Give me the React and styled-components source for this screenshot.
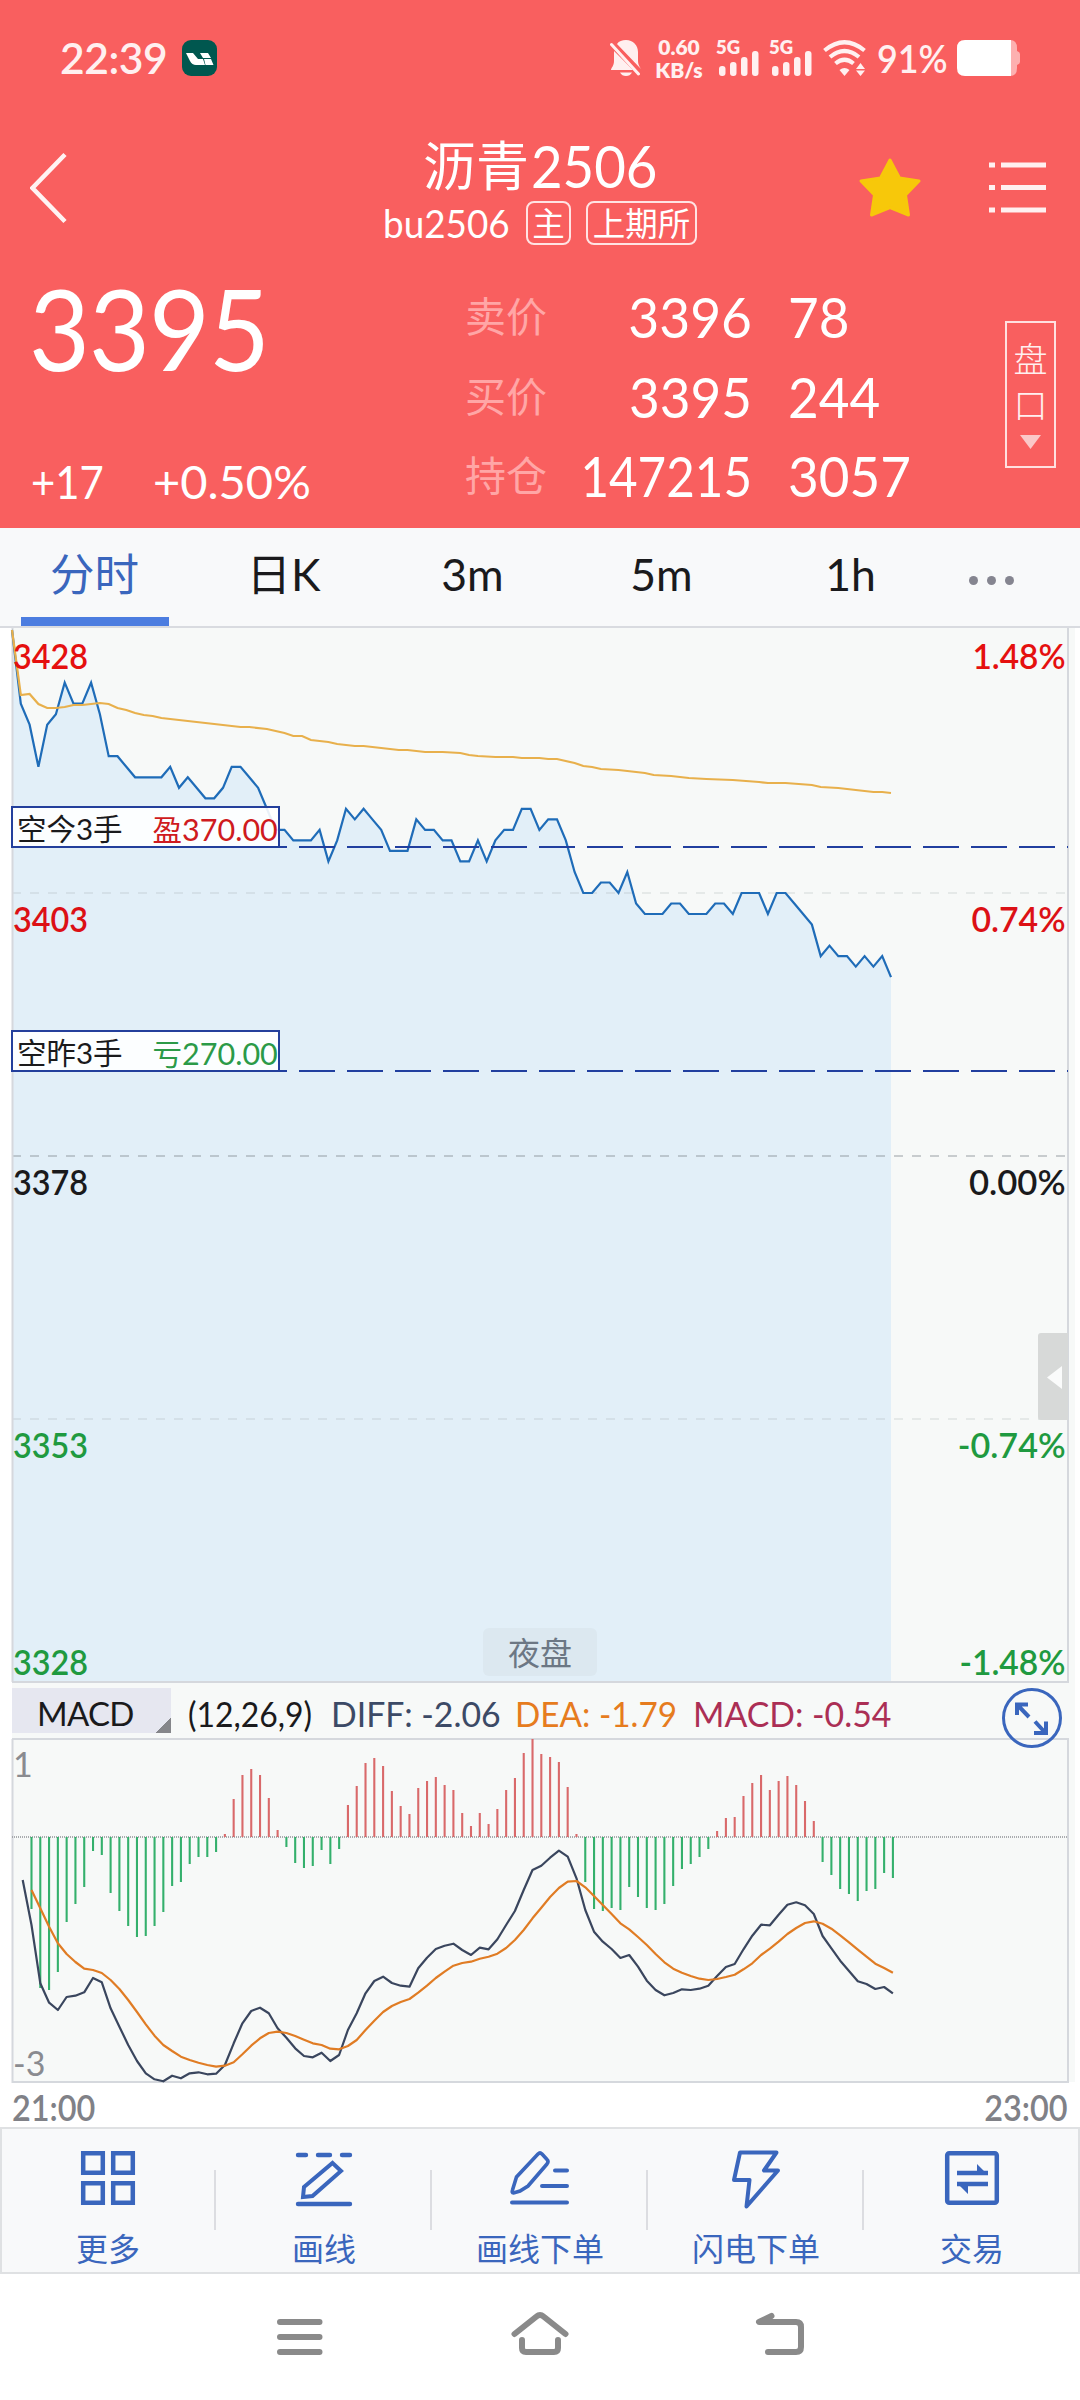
import styled, { createGlobalStyle } from "styled-components";

const GlobalStyle = createGlobalStyle`
  * {
    box-sizing: border-box;
  }
  body {
    margin: 0;
    background-color: #fff;
    font-family: Lato, "Noto Sans CJK SC", sans-serif;
  }
  svg {
    display: block;
    flex: none;
  }
`;

const BLUE = "#3a66bd";

/* price of every minute since 21:00 */
const PRICES = [
  3428, 3421, 3419, 3415, 3419, 3420, 3423, 3421, 3421, 3423, 3420, 3416, 3416,
  3415, 3414, 3414, 3414, 3414, 3415, 3413, 3414, 3413, 3412, 3412, 3413, 3415,
  3415, 3414, 3413, 3411, 3409, 3409, 3408, 3408, 3408, 3409, 3406, 3408, 3411,
  3410, 3411, 3410, 3409, 3407, 3407, 3407, 3410, 3409, 3409, 3408, 3408, 3406,
  3406, 3408, 3406, 3408, 3409, 3409, 3411, 3411, 3409, 3410, 3410, 3408, 3405,
  3403, 3403, 3404, 3404, 3403, 3405, 3402, 3401, 3401, 3401, 3402, 3402, 3401,
  3401, 3401, 3402, 3402, 3401, 3403, 3403, 3403, 3401, 3403, 3403, 3402, 3401,
  3400, 3397, 3398, 3397, 3397, 3396, 3397, 3396, 3397, 3395,
];

/* [minute, y] */
const AVERAGE = [
  [0, 2], [1, 67], [2, 66], [3, 76], [4, 80], [5, 80], [6, 79], [7, 77], [8, 77],
  [9, 76], [10, 75], [11, 76], [12, 80], [13, 82], [14, 85], [15, 87], [16, 88],
  [17, 90], [20, 93], [22, 95], [24, 97], [26, 99], [27, 99], [29, 101], [31, 105],
  [32, 108], [33, 108], [34, 112], [36, 114], [37, 116], [39, 118], [40, 118],
  [42, 120], [44, 122], [45, 122], [47, 124], [49, 124], [51, 125], [52, 127],
  [53, 128], [55, 129], [57, 129], [58, 130], [60, 130], [61, 131], [62, 131],
  [64, 135], [65, 138], [66, 139], [67, 141], [69, 142], [72, 145], [73, 147],
  [75, 148], [77, 150], [79, 151], [82, 152], [85, 154], [86, 155], [88, 155],
  [91, 157], [92, 159], [94, 160], [96, 162], [98, 164], [99, 164], [100, 165],
];

const HIST = [
  -216, -453, -459, -405, -255, -201, -150, -42, -54, -168, -222, -267, -300,
  -297, -267, -225, -147, -135, -81, -60, -60, -45, 9, 114, 186, 204, 186, 117,
  21, -30, -78, -93, -87, -39, -81, -36, 96, 153, 222, 237, 213, 138, 93, 69,
  147, 168, 180, 156, 141, 72, 33, 72, 39, 84, 141, 177, 252, 294, 249, 240, 225,
  150, 9, -135, -216, -222, -213, -219, -150, -180, -213, -219, -201, -147, -96,
  -81, -60, -36, 18, 57, 60, 123, 162, 186, 141, 168, 183, 156, 108, 48, -75,
  -114, -156, -171, -192, -162, -156, -108, -123,
];

const DIFF = [
  660, 795, 970, 1028, 1050, 1011, 1007, 997, 954, 967, 1045, 1100, 1155, 1203,
  1240, 1258, 1264, 1247, 1255, 1240, 1237, 1243, 1241, 1215, 1150, 1090, 1053,
  1043, 1060, 1105, 1133, 1165, 1188, 1192, 1178, 1203, 1185, 1110, 1060, 1000,
  963, 950, 969, 977, 980, 925, 893, 867, 857, 851, 870, 885, 863, 868, 838, 795,
  753, 690, 630, 617, 593, 572, 590, 655, 750, 815, 845, 867, 894, 885, 920, 962,
  990, 1006, 999, 988, 990, 986, 977, 948, 921, 912, 868, 827, 794, 796, 764,
  734, 727, 736, 762, 828, 865, 902, 933, 964, 972, 987, 981, 1000,
];

const DEA = [
  690, 745, 800, 850, 882, 906, 926, 930, 939, 960, 987, 1020, 1056, 1093, 1127,
  1155, 1173, 1190, 1200, 1208, 1215, 1220, 1217, 1207, 1183, 1157, 1135, 1119,
  1115, 1119, 1128, 1139, 1150, 1155, 1166, 1168, 1158, 1140, 1110, 1082, 1056,
  1038, 1026, 1017, 998, 977, 954, 935, 917, 909, 905, 896, 890, 881, 864, 840,
  810, 775, 743, 711, 684, 665, 663, 682, 708, 735, 762, 790, 808, 831, 855, 882,
  907, 926, 938, 948, 956, 960, 957, 951, 944, 928, 910, 885, 866, 845, 822, 804,
  789, 784, 791, 806, 826, 847, 869, 890, 911, 924, 938,
];

const STEP = 8.79;
const minuteX = (i) => 12 + i * STEP;
const priceY = (p) => 2 + (3428 - p) * 10.52;
const macdX = (i) => 22.7 + i * STEP;
const macdY = (v) => (v - 234) / 3;
const toPoints = (list) => list.map(([x, y]) => `${x.toFixed(1)},${y.toFixed(1)}`).join(" ");

const pricePoints = toPoints(PRICES.map((p, i) => [minuteX(i), priceY(p)]));
const averagePoints = toPoints(AVERAGE.map(([i, y]) => [minuteX(i), y]));
const diffPoints = toPoints(DIFF.map((v, i) => [macdX(i), macdY(v)]));
const deaPoints = toPoints(DEA.map((v, i) => [macdX(i + 1), macdY(v)]));

const SCALE = [
  { price: "3428", percent: "1.48%", top: 28, sx: 0.955, color: "#e5100f" },
  { price: "3403", percent: "0.74%", top: 291, sx: 0.965, color: "#dc1015" },
  { price: "3378", percent: "0.00%", top: 554, sx: 0.99, color: "#1a1a1c" },
  { price: "3353", percent: "-0.74%", top: 817, sx: 0.975, color: "#1f9a40" },
  { price: "3328", percent: "-1.48%", top: 1034, sx: 0.96, color: "#1f9a40" },
];

const POSITIONS = [
  { name: "空今3手", label: "盈", profit: "370.00", top: 178, color: "#cf1a20" },
  { name: "空昨3手", label: "亏", profit: "270.00", top: 402, color: "#2b9a48" },
];

const QUOTES = [
  { label: "卖价", price: "3396", volume: "78", sx: 0.935 },
  { label: "买价", price: "3395", volume: "244", sx: 0.93 },
  { label: "持仓", price: "147215", volume: "3057", sx: 0.865 },
];

const Signal = () => (
  <SignalWrap>
    <SignalType>5G</SignalType>
    <svg width="42" height="36" viewBox="0 0 42 36" fill="#fff0f0">
      <rect x="2" y="26" width="6.5" height="10" rx="3" />
      <rect x="13" y="22" width="6.5" height="14" rx="3" />
      <rect x="24" y="17" width="6.5" height="19" rx="3" />
      <rect x="35" y="11" width="6.5" height="25" rx="3" />
    </svg>
  </SignalWrap>
);

const StatusBar = () => (
  <StatusWrap>
    <Clock>22:39</Clock>
    <svg width="35" height="36" viewBox="0 0 35 36">
      <rect width="35" height="36" rx="9" fill="#00574f" />
      <path d="M4 13h7l5 6h5l2 6h-9q-4 0-6-4zM18 13h8l3 5h-8zM22 19h7l2.500 6h-8z" fill="#fff" />
    </svg>
    <StatusRight>
      <svg width="32" height="36" viewBox="0 0 32 36" fill="#fff0f0">
        <path d="M7 4C9 1 12 0 16 0c7 0 12 5 12 12v9c0 3 1 5 3 8L6.500 3.500zM4 11l19 19H1c0-2 3-4 3-9zM10 32.500h12q-2 3.500-6 3.500t-6-3.500z" />
        <path d="M1.500 4.500L28.500 34" stroke="#fff0f0" strokeWidth="3" strokeLinecap="round" />
      </svg>
      <Speed>
        <span>0.60</span>
        <span>KB/s</span>
      </Speed>
      <Signal />
      <Signal />
      <svg width="43" height="36" viewBox="0 0 43 36" fill="none" stroke="#fff0f0" strokeWidth="4.200">
        <path d="M1.500 10.500Q21.500-6 41.500 10.500M7 17Q21.500 5 36 17M12.500 23.500Q21.500 16 30.500 23.500" />
        <path d="M16.500 30q5-4 10 0l-5 6z" fill="#fff0f0" stroke="none" />
        <path d="M33 29l4.500-6 4.500 6zM33 30.500l4.500 5.500 4.500-5.500z" fill="#fff0f0" stroke="none" />
      </svg>
      <Percent>91%</Percent>
      <svg width="63" height="36" viewBox="0 0 63 36">
        <path d="M50 0h3q7 0 7 8v3q3 1 3 3v8q0 2-3 3v3q0 8-7 8h-3z" fill="#fdb0b0" />
        <path d="M8 0h46v36H8q-8 0-8-8V8q0-8 8-8z" fill="#fff" />
      </svg>
    </StatusRight>
  </StatusWrap>
);

const TitleBar = () => (
  <TitleWrap>
    <svg width="40" height="72" viewBox="0 0 40 72" fill="none" stroke="#fff3f3" strokeWidth="4.500">
      <path d="M35 2.500L2.500 36l32.500 33.500" />
    </svg>
    <TitleCenter>
      <Title>
        沥青<Squeezed $w={125} $sx={0.94}>2506</Squeezed>
      </Title>
      <SubTitle>
        <Squeezed $w={126} $sx={0.97}>bu2506</Squeezed>
        <Tag $w={45} $gap={17}>主</Tag>
        <Tag $w={111} $gap={15}>上期所</Tag>
      </SubTitle>
    </TitleCenter>
    <TitleRight>
      <svg width="64" height="62" viewBox="0 0 64 62">
        <path
          d="M32 3l9.500 18L61 24 47.500 38l3 20L32 50.500 13.500 58l3-20L3 24l19.500-3z"
          fill="#f7c80a"
          stroke="#f7c80a"
          strokeWidth="3"
          strokeLinejoin="round"
        />
      </svg>
      <svg width="57" height="52" viewBox="0 0 57 52" stroke="#fff0f0" strokeWidth="5">
        <path d="M0 3h6M12 3h45M0 25.500h6M12 25.500h45M0 48h6M12 48h45" />
      </svg>
    </TitleRight>
  </TitleWrap>
);

const Quote = () => (
  <QuoteWrap>
    <QuoteLeft>
      <LastPrice>3395</LastPrice>
      <Change>
        <Squeezed $w={122} $sx={0.89}>+17</Squeezed>
        <Squeezed $w={158} $sx={1}>+0.50%</Squeezed>
      </Change>
    </QuoteLeft>
    <QuoteTable>
      {QUOTES.map((q) => (
        <QuoteRow key={q.label}>
          <QuoteLabel>{q.label}</QuoteLabel>
          <QuotePrice $sx={q.sx}>{q.price}</QuotePrice>
          <QuoteVolume>{q.volume}</QuoteVolume>
        </QuoteRow>
      ))}
    </QuoteTable>
    <DepthButton>
      <span>盘</span>
      <span>口</span>
      <svg width="21" height="14" viewBox="0 0 21 14">
        <path d="M0 0h21L10.500 14z" fill="#fbc8c8" />
      </svg>
    </DepthButton>
  </QuoteWrap>
);

const PriceChart = () => (
  <ChartWrap>
    <svg width="1080" height="1055" viewBox="0 0 1080 1055" fill="none">
      <rect x="12" y="0" width="1063" height="1055" fill="#f7f9f8" />
      <path d={`M12 1054V2L${pricePoints} ${minuteX(100)},1054z`} fill="#e2eff8" />
      <g strokeWidth="2" strokeDasharray="9 9">
        <path d="M12 265h1056M12 791h1056" stroke="#8c989c" strokeOpacity=".17" />
        <path d="M12 528h1056" stroke="#7c8488" strokeOpacity=".38" />
      </g>
      <path d="M12.500 0v1054M12 1054h1057M1068 0v1055" stroke="#d5d8dd" strokeWidth="2" />
      <polyline points={pricePoints} stroke="#1f6cb8" strokeWidth="2.200" />
      <polyline points={averagePoints} stroke="#e8b04c" strokeWidth="2.200" />
      <path d="M11 219h1057M11 443h1057" stroke="#213f9f" strokeWidth="2" strokeDasharray="36 12" />
    </svg>
    {SCALE.map((s) => (
      <ScaleRow key={s.price} $top={s.top} $color={s.color}>
        <ScaleText $sx={0.925}>{s.price}</ScaleText>
        <ScaleText $sx={s.sx} $right>{s.percent}</ScaleText>
      </ScaleRow>
    ))}
    {POSITIONS.map((p) => (
      <Position key={p.name} $top={p.top}>
        <PositionName>{p.name}</PositionName>
        <Profit $color={p.color}>
          {p.label}
          <Squeezed $w={96} $sx={0.97}>{p.profit}</Squeezed>
        </Profit>
      </Position>
    ))}
    <Session>夜盘</Session>
    <Handle>
      <svg width="15" height="23" viewBox="0 0 15 23">
        <path d="M15 0v23L0 11.500z" fill="#fafbfb" />
      </svg>
    </Handle>
  </ChartWrap>
);

const Macd = () => (
  <>
    <MacdBar>
      <MacdButton>MACD</MacdButton>
      <Indicator $w={143} $sx={0.925} $color="#1a1a1c">(12,26,9)</Indicator>
      <Indicator $w={184} $sx={0.98} $color="#3c4a66">DIFF: -2.06</Indicator>
      <Indicator $w={178} $sx={0.965} $color="#e67c1e">DEA: -1.79</Indicator>
      <Indicator $w={202} $sx={0.98} $color="#ab2f55">MACD: -0.54</Indicator>
      <Expand>
        <svg width="60" height="60" viewBox="0 0 60 60" fill="none" stroke={BLUE} strokeWidth="3">
          <circle cx="30" cy="30" r="28.500" />
          <path d="M15 27V16.500h11M15.500 17L27 29M33 33.500L43.500 45M32 45h12V33.500" strokeWidth="4" />
        </svg>
      </Expand>
    </MacdBar>
    <MacdWrap>
      <svg width="1080" height="345" viewBox="0 0 1080 345" fill="none">
        <rect x="12" y="0" width="1063" height="344" fill="#f7f9f8" />
        <path d="M12 1h1056v343H12.500V1" stroke="#d5d8dd" strokeWidth="2" />
        <path d="M12 99h1056" stroke="#909296" strokeWidth="1.400" strokeDasharray="1 1" />
        {HIST.map((v, i) => (
          <path
            key={i}
            d={`M${macdX(i + 1)} 99v${-v / 3}`}
            stroke={v > 0 ? "#d9696a" : "#34b06c"}
            strokeWidth="2.100"
          />
        ))}
        <polyline points={diffPoints} stroke="#3a465e" strokeWidth="2.200" strokeLinejoin="round" />
        <polyline points={deaPoints} stroke="#e07c24" strokeWidth="2.200" strokeLinejoin="round" />
      </svg>
      <AxisLabel $top={9}>1</AxisLabel>
      <AxisLabel $top={308}>-3</AxisLabel>
    </MacdWrap>
    <TimeRow>
      <TimeText>21:00</TimeText>
      <TimeText $right>23:00</TimeText>
    </TimeRow>
  </>
);

const MoreIcon = () => (
  <svg width="60" height="60" viewBox="0 0 60 60" fill="none" stroke={BLUE} strokeWidth="4.500">
    <path d="M5.200 5.200h19.600v19.600H5.200zM35.200 5.200h19.600v19.600H35.200zM5.200 35.200h19.600v19.600H5.200zM35.200 35.200h19.600v19.600H35.200z" />
  </svg>
);

const DrawIcon = () => (
  <svg width="60" height="60" viewBox="0 0 60 60" fill="none" stroke={BLUE} strokeWidth="4.400" strokeLinecap="round">
    <path d="M4 7h8M24 7h12M48 7h8M4 56h52" />
    <path d="M38.500 15l8.500 8-28.500 25-9.500 1 1-10z" strokeWidth="4" />
  </svg>
);

const DrawOrderIcon = () => (
  <svg width="64" height="60" viewBox="0 0 64 60" fill="none" stroke={BLUE} strokeWidth="4" strokeLinecap="round">
    <path d="M4 54.500h55M34 38h25M47 22.500h12" />
    <path d="M30 6q2-2 4 0l5 5.500q2 2 0 4.500L20 38l-8 5-6.500 2q-2 0-1-3l4-13z" strokeWidth="3.600" />
  </svg>
);

const FlashIcon = () => (
  <svg width="60" height="62" viewBox="0 0 60 62" fill="none" stroke={BLUE} strokeWidth="4" strokeLinejoin="round">
    <path d="M14 4.500h36.500L38 22.500h14L20.500 58.500 23.500 32H8z" />
  </svg>
);

const TradeIcon = () => (
  <svg width="60" height="60" viewBox="0 0 60 60" fill="none" stroke={BLUE} strokeWidth="4.500">
    <rect x="5.200" y="5.200" width="49.600" height="49.600" rx="2" />
    <path d="M15 25h31M15 36h31" />
    <path d="M35 16l11 11H35zM26 46L15 35h11z" fill={BLUE} stroke="none" />
  </svg>
);

const ACTIONS = [
  { label: "更多", Icon: MoreIcon },
  { label: "画线", Icon: DrawIcon },
  { label: "画线下单", Icon: DrawOrderIcon },
  { label: "闪电下单", Icon: FlashIcon },
  { label: "交易", Icon: TradeIcon },
];

const SystemNav = () => (
  <SystemWrap>
    <svg width="240" height="60" viewBox="0 0 240 60" fill="none" stroke="#8a8a8a" strokeWidth="6" strokeLinecap="round">
      <path d="M100 15h39.500M100 30h39.500M100 45h39.500" />
    </svg>
    <svg width="240" height="60" viewBox="0 0 240 60" fill="none" stroke="#8a8a8a" strokeWidth="6" strokeLinecap="round" strokeLinejoin="round">
      <path d="M94.500 27l22-17.500q3.500-3 7 0l22 17.500M102 33v8q0 4 4 4h28q4 0 4-4v-8" />
    </svg>
    <svg width="240" height="60" viewBox="0 0 240 60" fill="none" stroke="#8a8a8a" strokeWidth="6" strokeLinecap="round" strokeLinejoin="round">
      <path d="M111.500 9L99 15h37q5 0 5 5v20q0 5-5 5h-28" />
    </svg>
  </SystemWrap>
);

const App = () => {
  return (
    <Screen>
      <GlobalStyle />
      <Header>
        <StatusBar />
        <TitleBar />
        <Quote />
      </Header>
      <Tabs>
        <Tab $active>分时</Tab>
        <Tab>日K</Tab>
        <Tab>3m</Tab>
        <Tab>5m</Tab>
        <Tab>1h</Tab>
        <MoreTab>
          <Dot />
          <Dot />
          <Dot />
        </MoreTab>
      </Tabs>
      <PriceChart />
      <Macd />
      <ActionBar>
        {ACTIONS.map(({ label, Icon }) => (
          <Action key={label}>
            <IconBox>
              <Icon />
            </IconBox>
            {label}
          </Action>
        ))}
      </ActionBar>
      <SystemNav />
    </Screen>
  );
};

export default App;

const Screen = styled.div`
  width: 1080px;
  height: 2400px;
  display: flex;
  flex-direction: column;
  overflow: hidden;
  background-color: #fff;
`;

/* narrow numerals: $w is the width that the text takes in the row */
const Squeezed = styled.span`
  display: inline-block;
  width: ${(p) => p.$w}px;
  white-space: nowrap;
  transform: scaleX(${(p) => p.$sx});
  transform-origin: left center;
`;

const Header = styled.header`
  height: 528px;
  background-color: #f95f5f;
  color: #fff;
`;

const StatusWrap = styled.div`
  height: 116px;
  padding: 0 60px 0 60px;
  display: flex;
  align-items: center;
  color: #fff0f0;
`;

const Clock = styled.div`
  width: 122px;
  font-size: 43px;
  font-weight: 600;
  line-height: 50px;
  letter-spacing: -0.5px;
  transform: scaleX(0.99);
  transform-origin: left center;
`;

const StatusRight = styled.div`
  margin-left: auto;
  display: flex;
  align-items: center;
  gap: 11px;
`;

const Speed = styled.div`
  width: 46px;
  margin: 0 4px 0 3px;
  display: flex;
  flex-direction: column;
  align-items: center;
  font-size: 21px;
  font-weight: 800;
  line-height: 23px;
`;

const SignalWrap = styled.div`
  position: relative;
  width: 42px;
`;

const SignalType = styled.span`
  position: absolute;
  left: -1px;
  top: -4px;
  font-size: 18.5px;
  font-weight: 800;
  line-height: 22px;
`;

const Percent = styled.div`
  width: 69px;
  font-size: 39px;
  font-weight: 600;
  line-height: 50px;
  transform: scaleX(0.92);
  transform-origin: left center;
`;

const TitleWrap = styled.div`
  height: 144px;
  padding: 0 34px 0 30px;
  display: grid;
  grid-template-columns: 190px 1fr 190px;
  align-items: center;
`;

const TitleCenter = styled.div`
  height: 144px;
  padding-top: 19px;
  display: flex;
  flex-direction: column;
  align-items: center;
`;

const Title = styled.div`
  height: 62px;
  padding-left: 3px;
  display: flex;
  align-items: center;
  gap: 2px;
  font-size: 53px;
  line-height: 60px;

  ${Squeezed} {
    font-size: 58px;
  }
`;

const SubTitle = styled.div`
  height: 52px;
  padding-left: 4px;
  display: flex;
  align-items: center;
  font-size: 38px;
  line-height: 44px;
`;

const Tag = styled.span`
  width: ${(p) => p.$w}px;
  height: 44px;
  margin-left: ${(p) => p.$gap}px;
  border: 2px solid #ffe3e3;
  border-radius: 8px;
  font-size: 32.5px;
  line-height: 42px;
  text-align: center;
`;

const TitleRight = styled.div`
  display: flex;
  align-items: center;
  justify-content: flex-end;
  gap: 67px;
`;

const QuoteWrap = styled.div`
  height: 268px;
  display: flex;
`;

const QuoteLeft = styled.div`
  width: 465px;
  padding: 7px 0 0 31px;
`;

const LastPrice = styled.div`
  height: 120px;
  margin-left: -2px;
  font-size: 113px;
  line-height: 120px;
  letter-spacing: -1px;
  transform: scaleX(0.93);
  transform-origin: left center;
`;

const Change = styled.div`
  margin-top: 64px;
  font-size: 47px;
  line-height: 60px;
  display: flex;
`;

const QuoteTable = styled.div`
  width: 540px;
  padding-top: 17px;
`;

const QuoteRow = styled.div`
  height: 79.5px;
  display: flex;
  align-items: center;
  font-size: 57px;
  line-height: 79px;
`;

const QuoteLabel = styled.div`
  width: 84px;
  font-size: 41px;
  color: #ffa6a6;
`;

const QuotePrice = styled.div`
  width: 203px;
  display: flex;
  justify-content: flex-end;
  transform: scaleX(${(p) => p.$sx});
  transform-origin: right center;
`;

const QuoteVolume = styled.div`
  margin-left: 36px;
  transform: scaleX(0.93);
  transform-origin: left center;
`;

const DepthButton = styled.div`
  width: 51px;
  height: 147px;
  margin-top: 61px;
  padding-top: 13px;
  border: 2px solid #ffe0e0;
  display: flex;
  flex-direction: column;
  align-items: center;
  font-size: 34px;
  font-weight: 300;
  line-height: 46px;
  color: #fff0f0;

  svg {
    margin-top: 7px;
  }
`;

const Tabs = styled.nav`
  height: 100px;
  border-bottom: 2px solid #d9dbe0;
  display: flex;
  background-color: #f8f9fa;
`;

const Tab = styled.div`
  width: 189px;
  height: 98px;
  display: flex;
  flex-direction: column;
  align-items: center;
  font-size: 44.5px;
  line-height: 92px;
  color: ${(p) => (p.$active ? BLUE : "#1a1a1c")};

  &::after {
    content: "";
    width: 148px;
    height: 9px;
    margin-top: -3px;
    background-color: ${(p) => (p.$active ? "#4c7de0" : "transparent")};
  }
`;

const MoreTab = styled.div`
  width: 93px;
  padding-top: 7px;
  display: flex;
  align-items: center;
  justify-content: center;
  gap: 9px;
`;

const Dot = styled.i`
  width: 9px;
  height: 9px;
  border-radius: 50%;
  background-color: #858590;
`;

const ChartWrap = styled.section`
  position: relative;
  height: 1055px;
`;

const ScaleRow = styled.div`
  position: absolute;
  left: 13px;
  right: 14px;
  top: ${(p) => p.$top - 21}px;
  display: flex;
  justify-content: space-between;
  color: ${(p) => p.$color};
`;

const ScaleText = styled.span`
  font-size: 35px;
  font-weight: 600;
  line-height: 40px;
  transform: scaleX(${(p) => p.$sx});
  transform-origin: ${(p) => (p.$right ? "right" : "left")} center;
`;

const Position = styled.div`
  position: absolute;
  left: 11px;
  top: ${(p) => p.$top}px;
  width: 269px;
  height: 42px;
  padding-left: 4px;
  border: 2px solid #233f9c;
  background-color: rgba(255, 255, 255, 0.9);
  display: flex;
  font-size: 29.5px;
  line-height: 42px;
`;

const PositionName = styled.span`
  width: 138px;
  color: #1a1a1c;
`;

const Profit = styled.span`
  white-space: nowrap;
  color: ${(p) => p.$color};

  ${Squeezed} {
    font-size: 31.5px;
  }
`;

const Session = styled.div`
  position: absolute;
  left: 483px;
  top: 1000px;
  width: 114px;
  height: 48px;
  border-radius: 6px;
  background-color: #dce8f0;
  font-size: 32px;
  line-height: 49px;
  text-align: center;
  color: #6c7784;
`;

const Handle = styled.div`
  position: absolute;
  left: 1038px;
  top: 705px;
  width: 30px;
  height: 87px;
  padding: 2px 0 0 9px;
  border-radius: 3px 0 0 3px;
  background-color: #d7d9d8;
  display: flex;
  align-items: center;
`;

const MacdBar = styled.div`
  height: 55px;
  margin: 0 5px 0 12px;
  padding-top: 5px;
  background-color: #f7f9f8;
  display: flex;
`;

const MacdButton = styled.div`
  width: 159px;
  height: 45px;
  margin-right: 17px;
  padding-left: 25px;
  background: linear-gradient(135deg, transparent 50%, #85868a 50%) right bottom / 15px 15px no-repeat #e6e7f0;
  font-size: 33px;
  letter-spacing: -0.7px;
  line-height: 51px;
  color: #1a1a1c;
`;

const Indicator = styled.div`
  width: ${(p) => p.$w}px;
  font-size: 34.5px;
  line-height: 51px;
  white-space: nowrap;
  color: ${(p) => p.$color};
  transform: scaleX(${(p) => p.$sx});
  transform-origin: left center;
`;

const Expand = styled.div`
  position: relative;
  z-index: 1;
  width: 60px;
  height: 60px;
  margin-left: 107px;
`;

const MacdWrap = styled.section`
  position: relative;
  height: 345px;
`;

const AxisLabel = styled.span`
  position: absolute;
  left: 13px;
  top: ${(p) => p.$top}px;
  font-size: 34px;
  line-height: 34px;
  color: #8a8b90;
`;

const TimeRow = styled.div`
  height: 44px;
  padding: 4px 12px 0;
  display: flex;
  justify-content: space-between;
`;

const TimeText = styled.span`
  font-size: 36px;
  font-weight: 600;
  line-height: 40px;
  color: #808187;
  transform: scaleX(0.9);
  transform-origin: ${(p) => (p.$right ? "right" : "left")} center;
`;

const ActionBar = styled.div`
  height: 147px;
  box-shadow: inset 0 0 0 2px #dfe1e3;
  background-color: #f8f9fa;
  display: flex;
`;

const Action = styled.div`
  flex: 1;
  padding-top: 21px;
  display: flex;
  flex-direction: column;
  align-items: center;
  font-size: 32px;
  line-height: 42px;
  color: ${BLUE};
  background: linear-gradient(#dcdde1, #dcdde1) right 43px / 2px 60px no-repeat;

  &:last-child {
    background: none;
  }
`;

const IconBox = styled.div`
  height: 80px;
`;

const SystemWrap = styled.nav`
  flex: 1;
  padding-top: 33px;
  display: flex;
  justify-content: center;
`;
